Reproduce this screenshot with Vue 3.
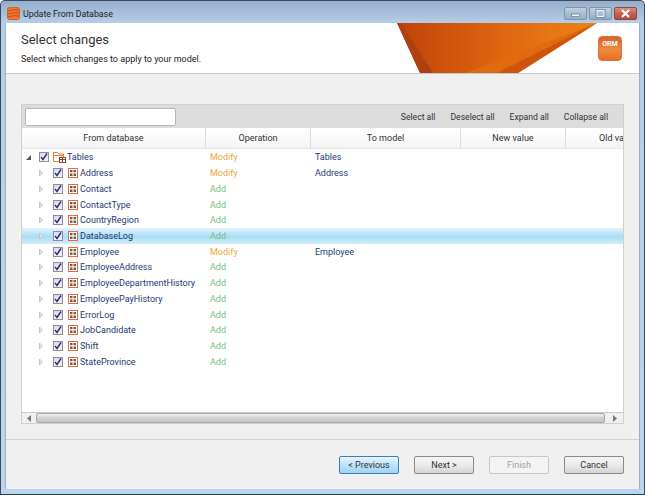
<script setup>
const M = 'Modify', A = 'Add'
const rows = [
  ['Address', M, 'Address'], ['Contact', A, ''], ['ContactType', A, ''], ['CountryRegion', A, ''],
  ['DatabaseLog', A, ''], ['Employee', M, 'Employee'], ['EmployeeAddress', A, ''],
  ['EmployeeDepartmentHistory', A, ''], ['EmployeePayHistory', A, ''], ['ErrorLog', A, ''],
  ['JobCandidate', A, ''], ['Shift', A, ''], ['StateProvince', A, '']
].map(([name, op, model]) => ({ name, op, model }))
const heads = ['From database', 'Operation', 'To model', 'New value', 'Old value']
const actions = ['Select all', 'Deselect all', 'Expand all', 'Collapse all']
</script>

<template>
  <div class="window">
    <div class="titlebar">
      <svg class="appicon" width="13" height="13" viewBox="0 0 13 13">
        <rect x="0.5" y="0.5" width="12" height="12" rx="2" fill="#ea7a2c" stroke="#d0602a" />
        <path d="M1 4q4-2 11-1M1 7q5-2 11-1M1 10q6-2 11-1" stroke="#c9481c" fill="none" />
      </svg>
      <span class="wintitle">Update From Database</span>
      <div class="controls">
        <div class="ctl"><svg width="21" height="11"><rect x="6.500" y="6" width="8" height="2.500" fill="#eef3f8" stroke="#5c6f84" stroke-width=".6" /></svg></div>
        <div class="ctl"><svg width="21" height="11"><rect x="7" y="2.500" width="7" height="6" fill="none" stroke="#f2f6fa" stroke-width="1.200" /><rect x="6" y="1.500" width="9" height="8" fill="none" stroke="#5c6f84" stroke-width=".6" /></svg></div>
        <div class="ctl close"><svg width="21" height="11"><path d="M7 2l7 7M14 2l-7 7" stroke="#fff" stroke-width="2.200" /></svg></div>
      </div>
    </div>

    <div class="client">
      <header class="head">
        <svg class="banner" width="200" height="50" viewBox="0 0 200 50">
          <defs>
            <linearGradient id="bg" x1="0" y1="0" x2="1" y2="0">
              <stop offset="0" stop-color="#bf430a" />
              <stop offset=".5" stop-color="#dd650f" />
              <stop offset="1" stop-color="#ea8418" />
            </linearGradient>
          </defs>
          <polygon points="0,0 200,0 121,50 23,50" fill="url(#bg)" />
          <polygon points="0,0 4,0 36,50 23,50" fill="#b0400f" />
          <polygon points="200,0 68,50 100,50" fill="#df6a0f" />
          <polygon points="200,0 100,50 121,50" fill="#cf530a" />
        </svg>
        <h1>Select changes</h1>
        <p>Select which changes to apply to your model.</p>
        <div class="orm">ORM</div>
      </header>

      <main class="body">
        <section class="panel">
          <div class="toolbar">
            <input class="search" type="text" />
            <div class="actions">
              <span v-for="a in actions" :key="a">{{ a }}</span>
            </div>
          </div>
          <div class="grid-head">
            <div v-for="(h, i) in heads" :key="h" class="hcell" :class="{ clip: i === 4 }">
              <span>{{ i === 4 ? 'Old va' : h }}</span>
            </div>
          </div>
          <div class="rows">
            <div class="row">
              <div class="tree root">
                <svg class="arrow" width="7" height="7"><path d="M6 1v5H1z" fill="#555" /></svg>
                <span class="check"><svg width="8" height="8"><path d="M1 4l2 2.500 4-6" stroke="#2a2a90" stroke-width="1.400" fill="none" /></svg></span>
                <svg class="folder" width="13" height="12" viewBox="0 0 13 12">
                  <path d="M.5 10.500v-9h4l1 1.500h5v7.500z" fill="#fff" stroke="#ee7a30" />
                  <path d="M.5 4.500h10" stroke="#ee7a30" />
                  <rect x="6.500" y="6.500" width="6" height="5" fill="#fff" stroke="#8b4a2a" />
                  <path d="M6 8.500h7M9.500 7v4" stroke="#8b4a2a" />
                </svg>
                <span class="name">Tables</span>
              </div>
              <div class="op modify">Modify</div>
              <div class="model">Tables</div>
            </div>
            <div v-for="r in rows" :key="r.name" class="row" :class="{ selected: r.name === 'DatabaseLog' }">
              <div class="tree">
                <svg class="arrow" width="6" height="8"><path d="M1.500 1l3 3-3 3z" fill="#e8e8e8" stroke="#c4c4c4" /></svg>
                <span class="check"><svg width="8" height="8"><path d="M1 4l2 2.500 4-6" stroke="#2a2a90" stroke-width="1.400" fill="none" /></svg></span>
                <svg class="table" width="10" height="10" viewBox="0 0 10 10">
                  <rect x=".5" y=".5" width="9" height="9" fill="#fff" stroke="#e8693a" />
                  <path d="M2 2h2.500v2.200H2zM5.500 2H8v2.200H5.500zM2 5.500h2.500V8H2zM5.500 5.500H8V8H5.500z" fill="#7a5a4a" />
                </svg>
                <span class="name">{{ r.name }}</span>
              </div>
              <div class="op" :class="r.op === 'Modify' ? 'modify' : 'add'">{{ r.op }}</div>
              <div class="model">{{ r.model }}</div>
            </div>
          </div>
          <div class="hscroll">
            <div class="sbtn"><svg width="5" height="7"><path d="M4 0v7L0 3.500z" fill="#777" /></svg></div>
            <div class="thumb"></div>
            <div class="sbtn end"><svg width="5" height="7"><path d="M1 0v7l4-3.500z" fill="#777" /></svg></div>
          </div>
        </section>
      </main>

      <footer class="foot">
        <button class="btn focus">&lt; Previous</button>
        <button class="btn">Next &gt;</button>
        <button class="btn disabled">Finish</button>
        <button class="btn">Cancel</button>
      </footer>
    </div>
  </div>
</template>

<style>
html, body { margin: 0; padding: 0; overflow: hidden; }
</style>

<style scoped>
.window {
  width: 645px; height: 495px; box-sizing: border-box;
  display: flex; flex-direction: column;
  border: 1px solid #3d4a55; border-bottom-color: #1d3d4a; border-radius: 5px 5px 0 0;
  padding: 0 4px 5px;
  background: linear-gradient(#94aecb 0, #b5cde6 22px, #bcd5ee 100%);
  font-family: Roboto, "Open Sans", sans-serif;
  font-size: 9px; color: #333;
  overflow: hidden;
}
.titlebar { height: 22px; flex: none; display: flex; align-items: center; gap: 3px; padding: 3px 0 0 2px; box-sizing: border-box; }
.appicon { flex: none; }
.wintitle { font-size: 8.800px; color: #222; }
.controls { margin-left: auto; display: flex; gap: 2px; margin-right: 3px; margin-top: 3px; align-self: flex-start; }
.ctl {
  width: 23px; height: 13px; box-sizing: border-box; display: flex; align-items: center; justify-content: center;
  border: 1px solid #7f93a9; border-radius: 2px;
  background: linear-gradient(#c0d2e4, #a9bed4 50%, #94adc7);
}
.ctl.close { border-color: #8c4a40; background: linear-gradient(#dd8f80, #c9604f 50%, #b94a38); }
.client { flex: 1; min-height: 0; display: flex; flex-direction: column; background: #f0f0f0; border: 1px solid #9fb0c0; border-width: 0 1px; }
.head { position: relative; height: 51px; flex: none; box-sizing: border-box; background: #fff; border-bottom: 1px solid #c8c8c8; padding: 8px 0 0 15px; }
h1 { margin: 0; font-size: 13px; font-weight: 400; line-height: 18px; color: #333; }
p { margin: 4px 0 0; font-size: 9px; line-height: 12px; color: #222; }
.banner { position: absolute; left: 391px; top: 0; }
.orm {
  position: absolute; left: 592px; top: 13px; width: 24px; height: 25px; box-sizing: border-box;
  border: 1px solid #e06a4a; border-radius: 4px;
  background: linear-gradient(#d9622a, #ef8a3c 55%, #e5701f);
  color: #fff; font-size: 7px; font-weight: 700; text-align: center; line-height: 15px;
}
.body { flex: 1; min-height: 0; padding: 30px 15px 0; }
.panel { width: 603px; height: 320px; box-sizing: border-box; border: 1px solid #d0d0d0; background: #fff; display: flex; flex-direction: column; overflow: hidden; }
.toolbar { height: 23px; flex: none; background: #dcdcdc; display: flex; align-items: center; padding-left: 3px; }
.search { width: 151px; height: 18px; box-sizing: border-box; border: 1px solid #b8b8b8; border-radius: 2px; background: #fff; padding: 0; margin: 0; }
.actions { margin-left: auto; display: flex; gap: 15px; padding-right: 15px; color: #333; font-size: 8.600px; }
.grid-head { height: 21px; flex: none; display: grid; grid-template-columns: 184px 105px 150px 105px 57px; background: linear-gradient(#fff, #f4f4f4); border-bottom: 1px solid #e8e8e8; box-sizing: border-box; }
.hcell { display: flex; align-items: center; justify-content: center; border-right: 1px solid #dcdcdc; white-space: nowrap; overflow: hidden; }
.hcell.clip { border-right: 0; justify-content: flex-start; padding-left: 33px; }
.rows { flex: 1; min-height: 0; padding-top: .5px; }
.row { height: 15.720px; display: grid; grid-template-columns: 184px 105px 150px; align-items: center; }
.row.selected { background: linear-gradient(#e4f4fc, #a9dcf5 55%, #d4eefa); }
.tree { display: flex; align-items: center; padding-left: 16px; white-space: nowrap; color: #1c3a72; }
.tree.root { padding-left: 3px; }
.arrow { flex: none; margin-right: 9px; }
.root .arrow { margin-right: 7px; }
.check { flex: none; width: 10px; height: 10px; box-sizing: border-box; border: 1px solid #8f8f9a; background: linear-gradient(#dcdce4, #f4f4f6); display: flex; align-items: center; justify-content: center; margin-right: 5px; }
.root .check { margin-right: 4px; }
.table { flex: none; margin-right: 2px; }
.folder { flex: none; margin-right: 1px; }
.op { padding-left: 4px; }
.modify { color: #eca93f; }
.add { color: #72c27c; }
.model { padding-left: 4px; color: #1c3a72; }
.hscroll { height: 10px; flex: none; display: flex; background: #f0f0f0; border-top: 1px solid #c8c8c8; }
.sbtn { width: 14px; flex: none; display: flex; align-items: center; justify-content: center; }
.sbtn.end { width: 18px; }
.thumb { flex: 1; border: 1px solid #a8a8a8; border-radius: 2px; background: linear-gradient(#f2f2f2, #d0d0d0 50%, #c6c6c6); box-sizing: border-box; }
.foot { margin-top: 14px; height: 50px; flex: none; box-sizing: border-box; border-top: 1px solid #d0d0d0; display: flex; justify-content: flex-end; gap: 15px; padding: 16px 15px 0 0; }
.btn {
  width: 60px; height: 18px; box-sizing: border-box; padding: 0; margin: 0;
  border: 1px solid #8a8a8a; border-radius: 2px;
  background: linear-gradient(#f4f4f4, #ebebeb 50%, #d4d4d4);
  font: inherit; color: #333;
}
.btn.focus { border-color: #3c7fb1; background: linear-gradient(#e8f5fd, #bfe3fb 50%, #9fd3f5); }
.btn.disabled { border-color: #c8c8c8; background: #f4f4f4; color: #a0a0a0; }
</style>
